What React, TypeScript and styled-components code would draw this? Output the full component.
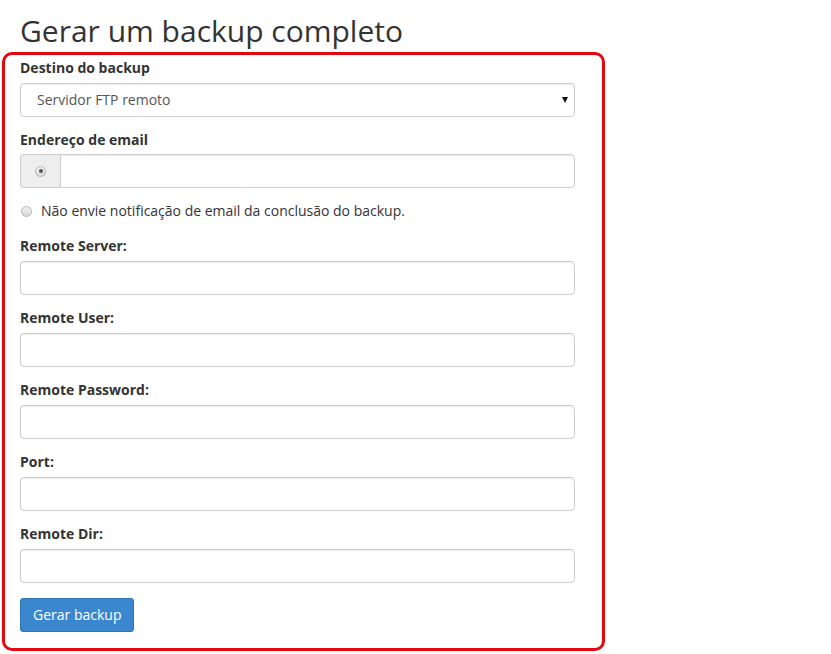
import styled, { createGlobalStyle } from "styled-components";

const GlobalStyle = createGlobalStyle`
  * {
    box-sizing: border-box;
  }
  body {
    margin: 0;
    background: #fff;
    font-family: "Open Sans", "Liberation Sans", sans-serif;
    font-size: 14px;
    line-height: 20px;
    color: #333;
  }
`;

const Title = styled.h1`
  margin: 13px 0 3px 20px;
  font-size: 30px;
  font-weight: 400;
  line-height: 36px;
  color: #333;
`;

const Highlight = styled.form`
  width: 603px;
  margin-left: 2px;
  padding: 3px 27px 16px 15px;
  border: 3px solid #e5070f;
  border-radius: 10px;
`;

const Group = styled.div`
  margin-bottom: 13px;
`;

const Label = styled.label`
  display: block;
  margin-bottom: 5px;
  font-weight: 700;
  line-height: 20px;
`;

const Field = styled.input`
  display: block;
  width: 100%;
  height: 34px;
  padding: 6px 12px;
  font: inherit;
  color: #555;
  background: #fff;
  border: 1px solid #ccc;
  border-radius: 4px;
  box-shadow: inset 0 1px 1px rgba(0, 0, 0, 0.075);
  outline: none;
`;

const SelectWrap = styled.div`
  position: relative;
`;

const Select = styled.select`
  display: block;
  width: 100%;
  height: 34px;
  padding: 6px 16px;
  font: inherit;
  color: #555;
  background: #fff;
  border: 1px solid #ccc;
  border-radius: 4px;
  box-shadow: inset 0 1px 1px rgba(0, 0, 0, 0.075);
  appearance: none;
  outline: none;
`;

const Caret = styled.span`
  position: absolute;
  right: 7px;
  top: 14px;
  width: 0;
  height: 0;
  border-left: 3.5px solid transparent;
  border-right: 3.5px solid transparent;
  border-top: 6px solid #111;
  pointer-events: none;
`;

const InputGroup = styled.div`
  display: flex;
  height: 34px;
  margin-top: -1px;
`;

const Addon = styled.span`
  display: flex;
  align-items: center;
  justify-content: center;
  width: 40px;
  flex: none;
  background: #eee;
  border: 1px solid #ccc;
  border-right: none;
  border-radius: 4px 0 0 4px;
`;

const GroupField = styled(Field)`
  flex: 1;
  border-radius: 0 4px 4px 0;
`;

const Radio = styled.span<{ $checked?: boolean }>`
  position: relative;
  display: inline-block;
  flex: none;
  width: 11px;
  height: 11px;
  border-radius: 50%;
  border: 1px solid #b5b5b5;
  background: linear-gradient(#f2f2f2, #d8d8d8);
  &::after {
    content: "";
    display: ${(p) => (p.$checked ? "block" : "none")};
    position: absolute;
    left: 2.5px;
    top: 2.5px;
    width: 4px;
    height: 4px;
    border-radius: 50%;
    background: #555;
  }
`;

const RadioRow = styled.div`
  display: flex;
  align-items: center;
  gap: 9px;
  margin: 3px 0 15px 0;
  padding-left: 1px;
  line-height: 20px;
`;

const Button = styled.button`
  display: inline-block;
  height: 34px;
  margin-top: 2px;
  padding: 6px 12px;
  font: inherit;
  color: #fff;
  background: #3a87cf;
  border: 1px solid #2f74b5;
  border-radius: 3px;
`;

const fields = [
  { id: "server", label: "Remote Server:", type: "text" },
  { id: "user", label: "Remote User:", type: "text" },
  { id: "pass", label: "Remote Password:", type: "password" },
  { id: "port", label: "Port:", type: "text" },
  { id: "rdir", label: "Remote Dir:", type: "text" },
];

export default function App() {
  return (
    <>
      <GlobalStyle />
      <Title>Gerar um backup completo</Title>
      <Highlight onSubmit={(e) => e.preventDefault()}>
        <Group>
          <Label htmlFor="dest">Destino do backup</Label>
          <SelectWrap>
            <Select id="dest" defaultValue="ftp">
              <option value="ftp">Servidor FTP remoto</option>
            </Select>
            <Caret />
          </SelectWrap>
        </Group>
        <Group>
          <Label htmlFor="email">Endereço de email</Label>
          <InputGroup>
            <Addon>
              <Radio $checked />
            </Addon>
            <GroupField id="email" type="text" />
          </InputGroup>
        </Group>
        <RadioRow>
          <Radio />
          <span>Não envie notificação de email da conclusão do backup.</span>
        </RadioRow>
        {fields.map((f) => (
          <Group key={f.id}>
            <Label htmlFor={f.id}>{f.label}</Label>
            <Field id={f.id} type={f.type} />
          </Group>
        ))}
        <Button type="submit">Gerar backup</Button>
      </Highlight>
    </>
  );
}
